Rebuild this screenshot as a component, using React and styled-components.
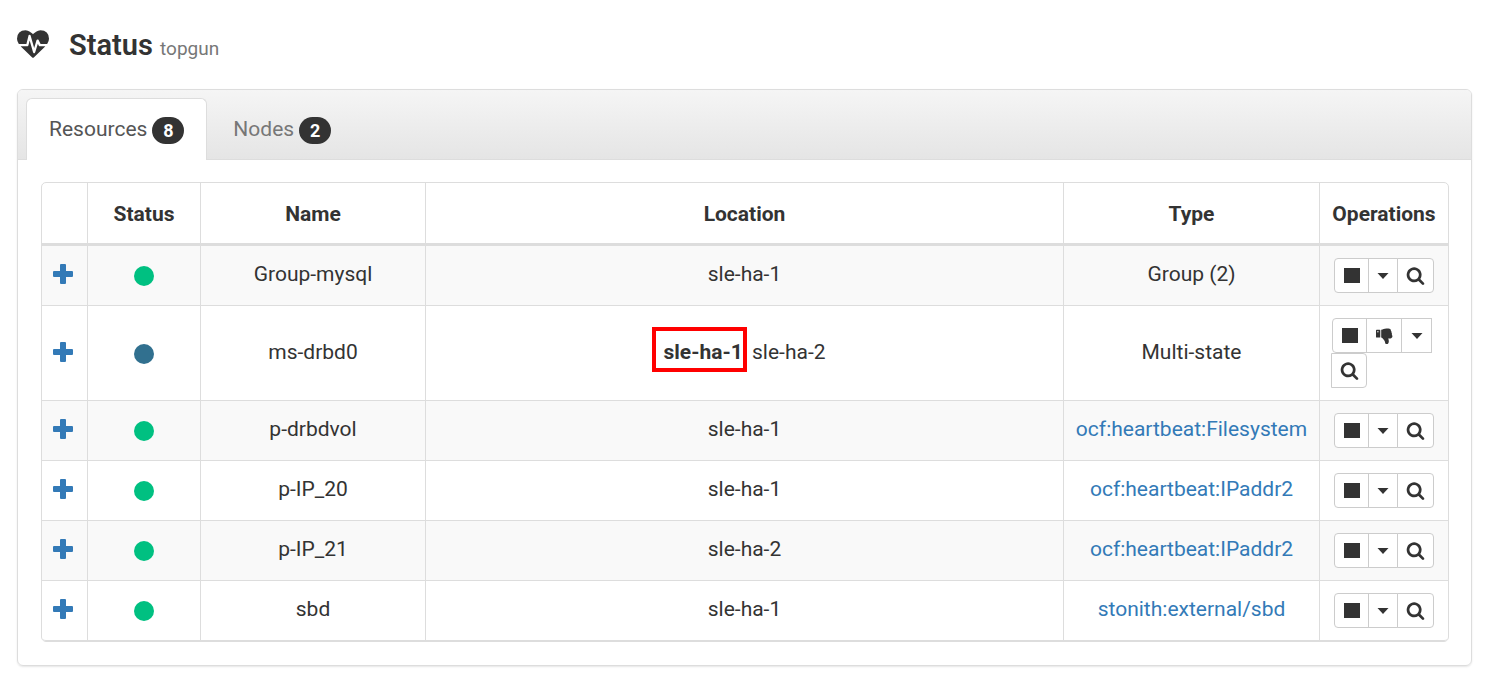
import React, { useState } from 'react';
import styled, { createGlobalStyle } from 'styled-components';

const GlobalStyle = createGlobalStyle`
  * {
    box-sizing: border-box;
  }

  body {
    margin: 0;
    background: #fff;
    color: #333;
    font-family: Roboto, 'Liberation Sans', sans-serif;
    font-size: 21px;
    line-height: 30px;
  }
`;

const Page = styled.main`
  padding: 24px 15px 30px 17px;
`;

const Header = styled.header`
  display: flex;
  align-items: center;
  gap: 20px;
  height: 40px;
  margin-bottom: 25px;
`;

const Title = styled.h1`
  margin: 0;
  padding-top: 6px;
  font-size: 29px;
  line-height: 40px;
  font-weight: 600;

  small {
    color: #777;
    font-size: 19px;
    font-weight: 400;
  }
`;

const Panel = styled.section`
  border: 1px solid #ddd;
  border-radius: 6px;
  box-shadow: 0 1px 2px rgba(0, 0, 0, 0.1);
`;

const Tabs = styled.div`
  display: flex;
  gap: 3px;
  padding: 8px 8px 0;
  height: 70px;
  border-bottom: 1px solid #ddd;
  border-radius: 5px 5px 0 0;
  background: linear-gradient(#f5f5f5, #e5e5e5);
`;

const Tab = styled.button`
  display: flex;
  align-items: center;
  gap: 5px;
  height: 62px;
  padding: 0 22px 2px;
  border: 1px solid ${(props) => (props.$active ? '#ddd' : 'transparent')};
  border-bottom: none;
  border-radius: 6px 6px 0 0;
  background: ${(props) => (props.$active ? '#fff' : 'transparent')};
  color: ${(props) => (props.$active ? '#555' : '#777')};
  font: inherit;
  cursor: pointer;
`;

const Badge = styled.span`
  width: 32px;
  margin-top: 4px;
  border-radius: 14px;
  background: #333;
  color: #fff;
  font-size: 18px;
  line-height: 27px;
  font-weight: 700;
  text-align: center;
`;

const PanelBody = styled.div`
  padding: 22px 22px 23px 23px;
`;

const Table = styled.table`
  width: 100%;
  table-layout: fixed;
  border: 1px solid #ddd;
  border-radius: 5px;
  border-spacing: 0;
  text-align: center;
`;

const Th = styled.th`
  width: ${(props) => props.$width || 'auto'};
  height: 63px;
  padding: 2px 0 0;
  border-bottom: 3px solid #ddd;
  font-weight: 700;

  & + & {
    border-left: 1px solid #ddd;
  }
`;

const Td = styled.td`
  padding: 10px 11px 13px;
  border-bottom: 1px solid #ddd;
  white-space: nowrap;

  & + & {
    border-left: 1px solid #ddd;
  }
`;

const OperationsTd = styled(Td)`
  padding: 12px;
`;

const Row = styled.tr`
  background: ${(props) => (props.$striped ? '#f9f9f9' : '#fff')};

  &:last-child td:first-child {
    border-bottom-left-radius: 4px;
  }

  &:last-child td:last-child {
    border-bottom-right-radius: 4px;
  }
`;

const IconButton = styled.button`
  display: block;
  padding: 0;
  border: none;
  background: none;
  color: #337ab7;
  cursor: pointer;

  svg {
    display: block;
  }
`;

const Dot = styled.span`
  display: block;
  width: 20px;
  height: 20px;
  margin: 4px auto 0;
  border-radius: 50%;
  background: ${(props) => props.$color};
`;

const TypeLink = styled.a`
  color: #337ab7;
  text-decoration: none;
`;

const Marked = styled.strong`
  position: relative;
  margin-right: 4px;

  &::after {
    content: '';
    position: absolute;
    top: -13px;
    right: -4px;
    bottom: -8px;
    left: -12px;
    border: 4px solid #f00;
  }
`;

const ButtonGroup = styled.div`
  display: inline-flex;
  flex-wrap: wrap;
  vertical-align: top;
`;

const OpButton = styled.button`
  display: flex;
  align-items: center;
  justify-content: center;
  width: ${(props) => props.$width || '36px'};
  height: 35px;
  padding: 0;
  border: 1px solid #ccc;
  background: #fff;
  color: #333;
  cursor: pointer;

  & + & {
    margin-left: -1px;
  }

  &:first-child {
    border-radius: 4px 0 0 4px;
  }

  &:last-child {
    border-radius: 0 4px 4px 0;
  }
`;

const HeartbeatIcon = () => (
  <svg width='32' height='32' viewBox='0 0 1792 1792' fill='currentColor' aria-hidden='true'>
    <path d='M1280 1024h305q-5 6-10 10.5t-9 7.5l-3 4-623 600q-18 18-44 18t-44-18l-624-602q-5-2-21-20h369q22 0 39.5-13.5t22.5-34.5l70-281 190 667q6 20 23 33t39 13q21 0 38-13t23-33l146-485 56 112q18 35 57 35zm512-428q0 145-103 300h-369l-111-221q-8-17-25.5-27t-36.5-8q-45 5-56 46l-129 430-196-686q-6-20-23.5-33t-39.5-13-39 13.5-22 34.5l-116 464h-423q-103-155-103-300 0-220 127-344t351-124q62 0 126.5 21.5t120 58 95.5 68.5 76 68q36-36 76-68t95.5-68.5 120-58 126.5-21.5q224 0 351 124t127 344z' />
  </svg>
);

const PlusIcon = () => (
  <svg width='20' height='20' viewBox='0 0 20 20' fill='currentColor' aria-hidden='true'>
    <path d='M8 0h4q1 0 1 1v6h6q1 0 1 1v4q0 1-1 1h-6v6q0 1-1 1H8q-1 0-1-1v-6H1q-1 0-1-1V8q0-1 1-1h6V1q0-1 1-1z' />
  </svg>
);

const StopIcon = () => (
  <svg width='16' height='15' viewBox='0 0 16 15' fill='currentColor' aria-hidden='true'>
    <rect width='16' height='15' />
  </svg>
);

const ThumbsDownIcon = () => (
  <svg width='17' height='17' viewBox='0 -1 17 17' fill='currentColor' aria-hidden='true'>
    <path
      fillRule='evenodd'
      d='M.7 1.8h2.9q.7 0 .7.7v6.4q0 .7-.7.7H.7q-.7 0-.7-.7V2.5q0-.7.7-.7zM1.9 3.1a.7.7 0 1 0 0 1.4.7.7 0 0 0 0-1.4z'
    />
    <path d='M5.2 1.8C7 1.700 8.200.6 10.400.6h2c1.700 0 2.600.9 2.500 2.200.6.5.8 1.300.6 2 .5.6.6 1.400.3 2 .5.6.7 1.200.6 1.800-.1 1.100-1 1.900-2 1.900h-2.200c.4 1 .7 2 .6 3.100-.1 1.800-.9 2.700-2.400 2.700-1 0-1.300-1.500-1.500-2.600-.2-1.100-.8-1.700-1.600-2.500C6.500 10.300 6 9.600 5.200 9.500z' />
  </svg>
);

const CaretIcon = () => (
  <svg width='12' height='6' viewBox='0 0 12 6' fill='currentColor' aria-hidden='true'>
    <path d='M0.5 0h11L6 6z' />
  </svg>
);

const SearchIcon = () => (
  <svg width='19' height='19' viewBox='0 0 1792 1792' fill='currentColor' aria-hidden='true'>
    <path d='M1216 832q0-185-131.5-316.5t-316.5-131.5-316.5 131.5-131.5 316.5 131.5 316.5 316.5 131.5 316.5-131.5 131.5-316.5zm512 832q0 52-38 90t-90 38q-54 0-90-38l-343-342q-179 124-399 124-143 0-273.5-55.5t-225-150-150-225-55.5-273.5 55.5-273.5 150-225 225-150 273.5-55.5 273.5 55.5 225 150 150 225 55.5 273.5q0 220-124 399l343 343q37 37 37 90z' />
  </svg>
);

const GREEN = '#00c081';
const BLUE = '#31708f';

const resources = [
  { name: 'Group-mysql', color: GREEN, location: 'sle-ha-1', type: 'Group (2)' },
  {
    name: 'ms-drbd0',
    color: BLUE,
    master: 'sle-ha-1',
    location: 'sle-ha-2',
    type: 'Multi-state',
  },
  {
    name: 'p-drbdvol',
    color: GREEN,
    location: 'sle-ha-1',
    type: 'ocf:heartbeat:Filesystem',
    link: true,
  },
  {
    name: 'p-IP_20',
    color: GREEN,
    location: 'sle-ha-1',
    type: 'ocf:heartbeat:IPaddr2',
    link: true,
  },
  {
    name: 'p-IP_21',
    color: GREEN,
    location: 'sle-ha-2',
    type: 'ocf:heartbeat:IPaddr2',
    link: true,
  },
  {
    name: 'sbd',
    color: GREEN,
    location: 'sle-ha-1',
    type: 'stonith:external/sbd',
    link: true,
  },
];

const Operations = ({ demote }) => (
  <ButtonGroup>
    <OpButton $width='35px' aria-label='Stop'>
      <StopIcon />
    </OpButton>
    {demote && (
      <OpButton aria-label='Demote'>
        <ThumbsDownIcon />
      </OpButton>
    )}
    <OpButton $width={demote ? '31px' : '30px'} aria-label='More'>
      <CaretIcon />
    </OpButton>
    <OpButton $width={demote ? '36px' : '37px'} aria-label='Details'>
      <SearchIcon />
    </OpButton>
  </ButtonGroup>
);

const App = () => {
  const [tab, setTab] = useState('resources');

  return (
    <>
      <GlobalStyle />
      <Page>
        <Header>
          <HeartbeatIcon />
          <Title>
            Status <small>topgun</small>
          </Title>
        </Header>
        <Panel>
          <Tabs role='tablist'>
            <Tab
              role='tab'
              aria-selected={tab === 'resources'}
              $active={tab === 'resources'}
              onClick={() => setTab('resources')}>
              Resources <Badge>8</Badge>
            </Tab>
            <Tab
              role='tab'
              aria-selected={tab === 'nodes'}
              $active={tab === 'nodes'}
              onClick={() => setTab('nodes')}>
              Nodes <Badge>2</Badge>
            </Tab>
          </Tabs>
          <PanelBody>
            <Table>
              <thead>
                <tr>
                  <Th $width='45px' aria-label='Expand' />
                  <Th $width='113px'>Status</Th>
                  <Th $width='225px'>Name</Th>
                  <Th>Location</Th>
                  <Th $width='256px'>Type</Th>
                  <Th $width='129px'>Operations</Th>
                </tr>
              </thead>
              <tbody>
                {resources.map((item, index) => (
                  <Row key={item.name} $striped={index % 2 === 0}>
                    <Td>
                      <IconButton aria-label={`Expand ${item.name}`}>
                        <PlusIcon />
                      </IconButton>
                    </Td>
                    <Td>
                      <Dot $color={item.color} />
                    </Td>
                    <Td>{item.name}</Td>
                    <Td>
                      {item.master && <Marked>{item.master}</Marked>}
                      {item.master && ' '}
                      {item.location}
                    </Td>
                    <Td>
                      {item.link ? <TypeLink href='#'>{item.type}</TypeLink> : item.type}
                    </Td>
                    <OperationsTd>
                      <Operations demote={Boolean(item.master)} />
                    </OperationsTd>
                  </Row>
                ))}
              </tbody>
            </Table>
          </PanelBody>
        </Panel>
      </Page>
    </>
  );
};

export default App;
